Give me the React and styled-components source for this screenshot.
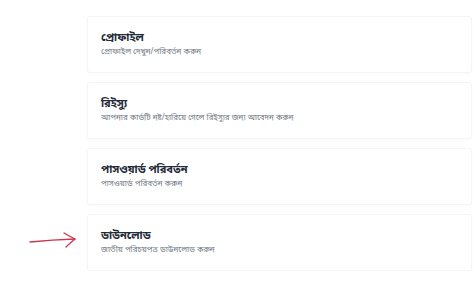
import React from "react";
import styled, { createGlobalStyle } from "styled-components";

const GlobalStyle = createGlobalStyle`
  body {
    margin: 0;
    background: #ffffff;
    font-family: "Noto Sans Bengali", "Noto Sans", "Liberation Sans", sans-serif;
  }
`;

const items = [
  { title: "প্রোফাইল", text: "প্রোফাইল দেখুন/পরিবর্তন করুন" },
  { title: "রিইস্যু", text: "আপনার কার্ডটি নষ্ট/হারিয়ে গেলে রিইস্যুর জন্য আবেদন করুন" },
  { title: "পাসওয়ার্ড পরিবর্তন", text: "পাসওয়ার্ড পরিবর্তন করুন" },
  { title: "ডাউনলোড", text: "জাতীয় পরিচয়পত্র ডাউনলোড করুন", marked: true },
];

const Arrow = () => (
  <svg width="87" height="57" viewBox="0 0 87 57">
    <path
      d="M30 28 C 45 26.5, 60 25.5, 75 25"
      fill="none"
      stroke="#c9344c"
      strokeWidth="1.3"
      strokeLinecap="round"
    />
    <path
      d="M64 19 C 68 21.5, 72 23.5, 75 25 C 72 27.5, 69 30, 66 33"
      fill="none"
      stroke="#c9344c"
      strokeWidth="1.3"
      strokeLinecap="round"
      strokeLinejoin="round"
    />
  </svg>
);

const App = () => {
  return (
    <>
      <GlobalStyle />
      <List>
        {items.map((item, index) => (
          <Row key={index}>
            <Gutter>{item.marked && <Arrow />}</Gutter>
            <Card>
              <Title>{item.title}</Title>
              <Subtitle>{item.text}</Subtitle>
            </Card>
          </Row>
        ))}
      </List>
    </>
  );
};

export default App;

const List = styled.div`
  display: flex;
  flex-direction: column;
  gap: 9px;
  padding: 16px 2px 0 0;
`;

const Row = styled.div`
  display: grid;
  grid-template-columns: 87px 1fr;
`;

const Gutter = styled.div`
  display: flex;
  align-items: center;
`;

const Card = styled.div`
  height: 57px;
  box-sizing: border-box;
  background: #ffffff;
  border: 1px solid #f5f5f6;
  border-radius: 3px;
  box-shadow: 0 1px 3px rgba(0, 0, 0, 0.025);
  display: flex;
  flex-direction: column;
  justify-content: center;
  padding: 0 13px;
`;

const Title = styled.div`
  font-size: 11px;
  font-weight: 700;
  line-height: 15px;
  color: #232a38;
`;

const Subtitle = styled.div`
  font-size: 8px;
  line-height: 12px;
  color: #737a86;
`;
